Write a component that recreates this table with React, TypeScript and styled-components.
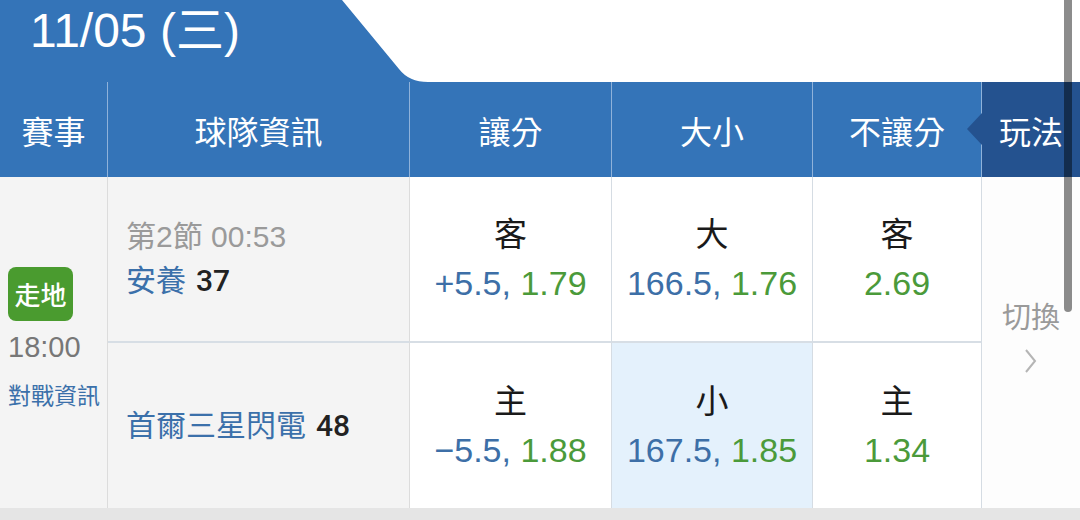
import React from 'react';
import styled, { createGlobalStyle } from 'styled-components';

const GlobalStyle = createGlobalStyle`
  html, body {
    margin: 0;
    padding: 0;
    background: #ffffff;
  }
  body {
    font-family: "Liberation Sans", "Noto Sans CJK TC", sans-serif;
    -webkit-font-smoothing: antialiased;
  }
`;

const Page = styled.div`
  position: relative;
  width: 1080px;
  height: 520px;
  overflow: hidden;
  background: #ffffff;
`;

const TabBar = styled.div`
  display: flex;
  height: 82px;
`;

const DateTab = styled.div`
  width: 430px;
  height: 82px;
  box-sizing: border-box;
  padding: 4px 0 0 30px;
  background: #3474b8;
  clip-path: path('M0 0 H342 L399 69 Q409 82 428 82 H0 Z');
  color: #ffffff;
  font-size: 48px;
  line-height: 54px;
`;

const Table = styled.div`
  display: grid;
  grid-template-columns: 108px 302px 202px 201px 169px 98px;
  grid-template-rows: 95px 166px 165px;
`;

const HeadCell = styled.div<{ $dark?: boolean; $last?: boolean }>`
  position: relative;
  display: flex;
  align-items: center;
  justify-content: center;
  box-sizing: border-box;
  background: ${p => (p.$dark ? '#24528f' : '#3474b8')};
  border-right: ${p => (p.$last ? 'none' : '1px solid #8fb2da')};
  color: #ffffff;
  font-size: 32px;

  ${p =>
    p.$dark &&
    `
    &::before {
      content: '';
      position: absolute;
      left: -15px;
      top: 31px;
      border-top: 16px solid transparent;
      border-bottom: 16px solid transparent;
      border-right: 15px solid #24528f;
    }
  `}
`;

const EventCell = styled.div`
  grid-column: 1;
  grid-row: 2 / span 2;
  display: flex;
  flex-direction: column;
  align-items: flex-start;
  justify-content: center;
  box-sizing: border-box;
  padding: 0 0 8px 8px;
  background: #f4f4f4;
  border-right: 1px solid #dcdcdc;
`;

const LiveBadge = styled.div`
  width: 65px;
  height: 54px;
  display: flex;
  align-items: center;
  justify-content: center;
  border-radius: 8px;
  background: #4a9b2f;
  color: #ffffff;
  font-size: 26px;
  font-weight: 500;
`;

const StartTime = styled.div`
  margin-top: 6px;
  color: #777777;
  font-size: 29px;
  line-height: 40px;
`;

const InfoLink = styled.div`
  margin-top: 14px;
  color: #3b70aa;
  font-size: 23px;
  line-height: 30px;
`;

const TeamCell = styled.div<{ $top?: boolean }>`
  grid-column: 2;
  display: flex;
  flex-direction: column;
  justify-content: center;
  box-sizing: border-box;
  padding-left: 18px;
  background: #f4f4f4;
  border-right: 1px solid #dcdcdc;
  border-bottom: ${p => (p.$top ? '2px solid #d7dee5' : 'none')};
  font-size: 30px;
  line-height: 44px;
  white-space: nowrap;
`;

const Period = styled.div`
  color: #9a9a9a;
`;

const TeamLine = styled.div`
  color: #3b70aa;
`;

const Score = styled.span`
  margin-left: 10px;
  color: #222222;
  font-family: Roboto, "Liberation Sans", sans-serif;
  font-weight: 500;
`;

const OddsCell = styled.div<{ $top?: boolean; $active?: boolean }>`
  display: flex;
  flex-direction: column;
  align-items: center;
  justify-content: center;
  box-sizing: border-box;
  background: ${p => (p.$active ? '#e4f1fc' : '#ffffff')};
  border-right: 1px solid #d5dce3;
  border-bottom: ${p => (p.$top ? '2px solid #d7dee5' : 'none')};
  font-size: 34px;
  line-height: 48px;
`;

const Side = styled.div`
  color: #1a1a1a;
  font-size: 33px;
`;

const OddsLine = styled.div`
  white-space: nowrap;
`;

const Line = styled.span`
  color: #3d6fa7;
`;

const Price = styled.span`
  color: #4b9a3a;
`;

const SwitchCell = styled.div`
  grid-column: 6;
  grid-row: 2 / span 2;
  display: flex;
  flex-direction: column;
  align-items: center;
  justify-content: center;
  padding-bottom: 14px;
  background: #fdfdfd;
  color: #9a9a9a;
  font-size: 29px;
  line-height: 40px;
`;

const Chevron = styled.svg`
  margin-top: 10px;
`;

const Footer = styled.div`
  height: 12px;
  background: #e5e5e5;
`;

const ScrollThumb = styled.div`
  position: absolute;
  left: 1064px;
  top: 0;
  width: 8px;
  height: 312px;
  border-radius: 0 0 4px 4px;
  background: rgba(0, 0, 0, 0.45);
`;

type Odd = { side: string; line?: string; price: string; active?: boolean };

const topOdds: Odd[] = [
  { side: '客', line: '+5.5, ', price: '1.79' },
  { side: '大', line: '166.5, ', price: '1.76' },
  { side: '客', price: '2.69' },
];

const bottomOdds: Odd[] = [
  { side: '主', line: '\u22125.5, ', price: '1.88' },
  { side: '小', line: '167.5, ', price: '1.85', active: true },
  { side: '主', price: '1.34' },
];

const renderOdds = (list: Odd[], top: boolean) =>
  list.map((o, i) => (
    <OddsCell key={`${top ? 't' : 'b'}${i}`} $top={top} $active={o.active}>
      <Side>{o.side}</Side>
      <OddsLine>
        {o.line && <Line>{o.line}</Line>}
        <Price>{o.price}</Price>
      </OddsLine>
    </OddsCell>
  ));

export default function App() {
  return (
    <Page>
      <GlobalStyle />
      <TabBar>
        <DateTab>11/05 (三)</DateTab>
      </TabBar>
      <Table>
        <HeadCell>賽事</HeadCell>
        <HeadCell>球隊資訊</HeadCell>
        <HeadCell>讓分</HeadCell>
        <HeadCell>大小</HeadCell>
        <HeadCell>不讓分</HeadCell>
        <HeadCell $dark $last>玩法</HeadCell>

        <EventCell>
          <LiveBadge>走地</LiveBadge>
          <StartTime>18:00</StartTime>
          <InfoLink>對戰資訊</InfoLink>
        </EventCell>
        <TeamCell $top>
          <Period>第2節 00:53</Period>
          <TeamLine>
            安養<Score>37</Score>
          </TeamLine>
        </TeamCell>
        {renderOdds(topOdds, true)}
        <SwitchCell>
          <div>切換</div>
          <Chevron width="14" height="26" viewBox="0 0 14 26">
            <path d="M2 2 L11 13 L2 24" fill="none" stroke="#b5b5b5" strokeWidth="2" />
          </Chevron>
        </SwitchCell>

        <TeamCell>
          <TeamLine>
            首爾三星閃電<Score>48</Score>
          </TeamLine>
        </TeamCell>
        {renderOdds(bottomOdds, false)}
      </Table>
      <Footer />
      <ScrollThumb />
    </Page>
  );
}
